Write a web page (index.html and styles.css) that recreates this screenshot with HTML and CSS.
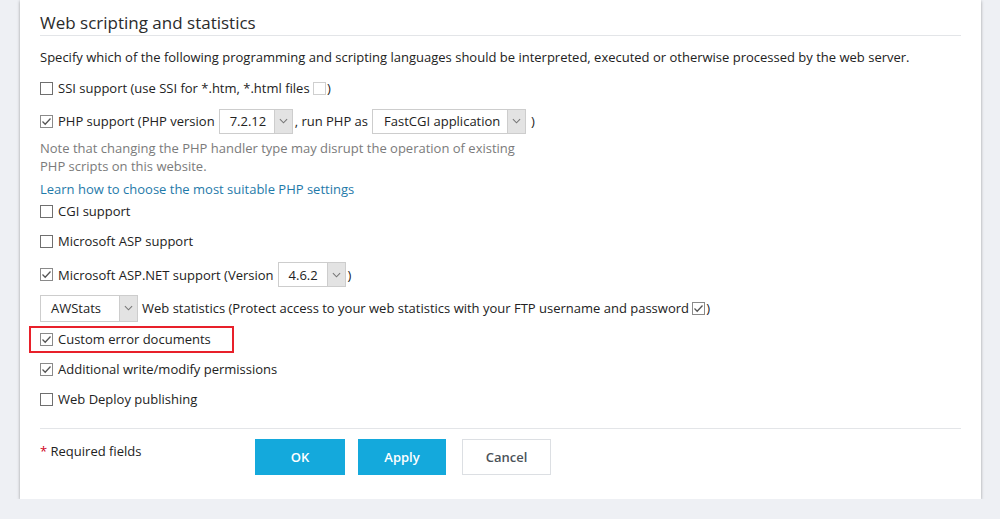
FILE: index.html
```html
<!DOCTYPE html>
<html lang="en">
<head>
  <meta charset="UTF-8">
  <title>Web scripting and statistics</title>
  <link rel="stylesheet" href="styles.css">
</head>
<body>

  <div class="card">
    <h2 class="section-title">Web scripting and statistics</h2>
    <p class="desc">Specify which of the following programming and scripting languages should be interpreted, executed or otherwise processed by the web server.</p>

    <div class="row h30">
      <span class="cb"></span>
      <span class="label">SSI support (use SSI for *.htm, *.html files <span class="cb cb-small disabled"></span>)</span>
    </div>

    <div class="row h36">
      <span class="cb checked"><svg viewBox="0 0 13 13"><path d="M2.5 6.5 L5.2 9.2 L10.5 3.5"/></svg></span>
      <span class="label">PHP support (PHP version</span>
      <div class="select w-php">
        <span class="select-text">7.2.12</span>
        <span class="arrow"><svg viewBox="0 0 10 6"><path d="M1 1 L5 5 L9 1"/></svg></span>
      </div>
      <span class="label">, run PHP as</span>
      <div class="select w-handler">
        <span class="select-text">FastCGI application</span>
        <span class="arrow"><svg viewBox="0 0 10 6"><path d="M1 1 L5 5 L9 1"/></svg></span>
      </div>
      <span class="label">)</span>
    </div>

    <p class="note">Note that changing the PHP handler type may disrupt the operation of existing PHP scripts on this website.</p>
    <a class="help-link" href="#">Learn how to choose the most suitable PHP settings</a>

    <div class="row h30">
      <span class="cb"></span>
      <span class="label">CGI support</span>
    </div>

    <div class="row h30">
      <span class="cb"></span>
      <span class="label">Microsoft ASP support</span>
    </div>

    <div class="row h36 down1">
      <span class="cb checked"><svg viewBox="0 0 13 13"><path d="M2.5 6.5 L5.2 9.2 L10.5 3.5"/></svg></span>
      <span class="label">Microsoft ASP.NET support (Version</span>
      <div class="select w-net">
        <span class="select-text">4.6.2</span>
        <span class="arrow"><svg viewBox="0 0 10 6"><path d="M1 1 L5 5 L9 1"/></svg></span>
      </div>
      <span class="label">)</span>
    </div>

    <div class="row h32">
      <div class="select w-stats first">
        <span class="select-text">AWStats</span>
        <span class="arrow"><svg viewBox="0 0 10 6"><path d="M1 1 L5 5 L9 1"/></svg></span>
      </div>
      <span class="label">Web statistics (Protect access to your web statistics with your FTP username and password <span class="cb cb-small checked"><svg viewBox="0 0 13 13"><path d="M2.5 6.5 L5.2 9.2 L10.5 3.5"/></svg></span>)</span>
    </div>

    <div class="row h30">
      <div class="highlight">
        <span class="cb checked"><svg viewBox="0 0 13 13"><path d="M2.5 6.5 L5.2 9.2 L10.5 3.5"/></svg></span>
        <span class="label">Custom error documents</span>
      </div>
    </div>

    <div class="row h30">
      <span class="cb checked"><svg viewBox="0 0 13 13"><path d="M2.5 6.5 L5.2 9.2 L10.5 3.5"/></svg></span>
      <span class="label">Additional write/modify permissions</span>
    </div>

    <div class="row h30">
      <span class="cb"></span>
      <span class="label">Web Deploy publishing</span>
    </div>

    <div class="form-footer">
      <div class="required"><span class="star">*</span> Required fields</div>
      <div class="buttons">
        <button class="btn btn-primary btn-ok">OK</button>
        <button class="btn btn-primary btn-apply">Apply</button>
        <button class="btn btn-cancel">Cancel</button>
      </div>
    </div>
  </div>

</body>
</html>
```

FILE: styles.css
```css
body {
  font-family: 'Open Sans', sans-serif;
  font-size: 13px;
  color: #222;
  margin: 0;
  padding: 0;
  background: #eef0f4;
}

.card {
  width: 961px;
  box-sizing: border-box;
  margin-left: 20px;
  padding: 12px 20px 0 20px;
  background: #fff;
  box-shadow: 0 1px 3px rgba(0, 0, 0, 0.35);
}

.section-title {
  margin: 0;
  font-size: 17px;
  font-weight: normal;
  line-height: 22px;
  color: #2b2b2b;
  padding-bottom: 1px;
  border-bottom: 1px solid #e3e5e8;
}

.desc {
  margin: 12px 0 7px 0;
  line-height: 18px;
}

.row {
  display: flex;
  align-items: center;
}

.h30 { height: 30px; }
.h32 { height: 32px; }
.h36 { height: 36px; }

/* nudge a row down a pixel without changing the flow below */
.down1 { padding-top: 1px; height: 35px; }

.cb {
  display: inline-block;
  width: 13px;
  height: 13px;
  box-sizing: border-box;
  border: 1px solid #6f6f6f;
  background: #fff;
  margin-right: 5px;
  flex-shrink: 0;
  position: relative;
}

.cb.checked {
  border-color: #8a8a8a;
}

.cb svg {
  position: absolute;
  left: -1px;
  top: -1px;
  width: 13px;
  height: 13px;
}

.cb svg path {
  fill: none;
  stroke: #555;
  stroke-width: 1.3;
}

.cb-small {
  vertical-align: -2px;
  margin: 0 1px 0 0;
}

.cb-small.disabled {
  border-color: #cfcfcf;
}

.label {
  white-space: nowrap;
}

.select {
  display: flex;
  align-items: stretch;
  height: 25px;
  box-sizing: border-box;
  border: 1px solid #cdcdcd;
  background: #fff;
  margin: 0 2px 0 4px;
}

.select.first {
  margin-left: 0;
  margin-right: 4px;
  height: 27px;
}

.select-text {
  flex: 1;
  display: flex;
  align-items: center;
  padding-left: 10px;
}

.arrow {
  width: 17px;
  background: #e3e3e3;
  border-left: 1px solid #cdcdcd;
  display: flex;
  align-items: center;
  justify-content: center;
}

.arrow svg {
  width: 9px;
  height: 6px;
}

.arrow svg path {
  fill: none;
  stroke: #777;
  stroke-width: 1.2;
}

.w-php { width: 74px; }
.w-handler { width: 154px; margin-right: 5px; }
.w-handler .select-text { padding-left: 11px; }
.w-net { width: 68px; }
.w-stats { width: 98px; }

.note {
  margin: 0;
  width: 490px;
  line-height: 18px;
  color: #7b7b7b;
}

.help-link {
  display: block;
  margin-top: 5px;
  height: 16px;
  line-height: 18px;
  color: #1f7aa9;
  text-decoration: none;
}

.highlight {
  display: flex;
  align-items: center;
  width: 205px;
  height: 27px;
  box-sizing: border-box;
  margin-left: -11px;
  padding-left: 9px;
  border: 2px solid #e8202a;
}

.form-footer {
  display: flex;
  margin-top: 14px;
  padding: 10px 0 24px 0;
  border-top: 1px solid #e3e5e8;
}

.required {
  width: 215px;
  line-height: 24px;
  color: #222;
}

.star {
  color: #d0021b;
}

.buttons {
  display: flex;
}

.btn {
  height: 36px;
  font-family: 'Open Sans', sans-serif;
  font-size: 13px;
  font-weight: 600;
  border: none;
  padding: 0;
  cursor: pointer;
}

.btn-primary {
  background: #14a9dc;
  color: #fff;
}

.btn-ok { width: 90px; margin-right: 13px; }
.btn-apply { width: 88px; margin-right: 16px; }

.btn-cancel {
  width: 89px;
  background: #fff;
  color: #4b5259;
  border: 1px solid #dcdfe3;
}
```
